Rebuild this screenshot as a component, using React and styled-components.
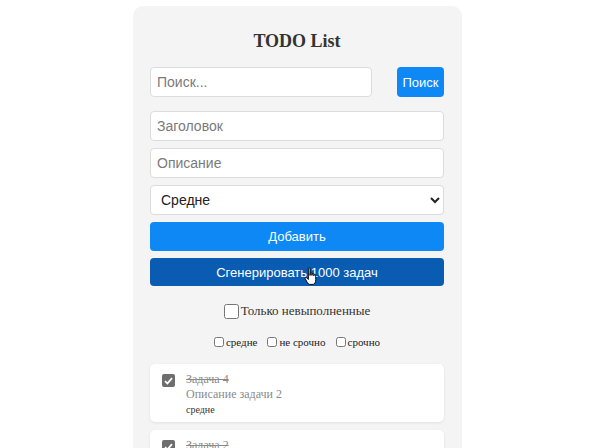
import React from 'react';
import styled, { createGlobalStyle } from 'styled-components';

const GlobalStyle = createGlobalStyle`
  body {
    margin: 0;
    background: #ffffff;
    font-family: "Liberation Serif", "Times New Roman", serif;
    overflow: hidden;
  }
`;

const Page = styled.div`
  display: flex;
  justify-content: center;
  padding: 6px 5px 0 0;
`;

const Container = styled.div`
  position: relative;
  width: 329px;
  box-sizing: border-box;
  padding: 24px 18px 20px 17px;
  background: #f4f4f4;
  border-radius: 10px;
  display: flex;
  flex-direction: column;
`;

const Title = styled.h2`
  margin: 0 0 15px;
  text-align: center;
  font-size: 18px;
  line-height: 22px;
  font-weight: bold;
  color: #333;
`;

const SearchRow = styled.div`
  display: flex;
  gap: 25px;
  margin-bottom: 14px;
`;

const Input = styled.input`
  flex: ${p => (p.$grow ? 1 : 'none')};
  height: 30px;
  box-sizing: border-box;
  padding: 0 6px;
  border: 1px solid #dcdcdc;
  border-radius: 4px;
  background: #fff;
  font-family: "Liberation Sans", Arial, sans-serif;
  font-size: 14px;
  color: #333;
  outline: none;
  &::placeholder { color: #7a7a7a; }
`;

const Form = styled.div`
  display: flex;
  flex-direction: column;
  gap: 7px;
`;

const Select = styled.select`
  height: 30px;
  box-sizing: border-box;
  padding: 0 6px;
  border: 1px solid #dcdcdc;
  border-radius: 4px;
  background: #fff;
  font-family: "Liberation Sans", Arial, sans-serif;
  font-size: 14px;
  color: #222;
`;

const Button = styled.button`
  flex: none;
  height: ${p => p.$h || 29}px;
  width: ${p => (p.$small ? '47px' : '100%')};
  box-sizing: border-box;
  border: none;
  border-radius: 4px;
  background: ${p => (p.$dark ? '#0a5cb2' : '#0d88f5')};
  color: #fff;
  font-family: "Liberation Sans", Arial, sans-serif;
  font-size: 13px;
  cursor: pointer;
  padding: 0;
`;

const OnlyRow = styled.label`
  display: flex;
  align-items: center;
  justify-content: center;
  margin-top: 17px;
  font-size: 13px;
  color: #333;
`;

const BigBox = styled.input`
  width: 15px;
  height: 15px;
  margin: 0 2px 0 0;
`;

const FilterRow = styled.div`
  display: flex;
  justify-content: center;
  gap: 10px;
  margin-top: 17px;
  font-size: 11px;
  color: #222;
`;

const FilterItem = styled.label`
  display: flex;
  align-items: center;
`;

const SmallBox = styled.input`
  width: 10px;
  height: 10px;
  margin: 0 2px 0 0;
`;

const List = styled.div`
  display: flex;
  flex-direction: column;
  gap: 8px;
  margin-top: 16px;
`;

const Card = styled.div`
  display: flex;
  align-items: flex-start;
  gap: 11px;
  padding: 8px 12px 5px;
  background: #fff;
  border-radius: 5px;
  box-shadow: 0 1px 3px rgba(0, 0, 0, 0.08);
`;

const Check = styled.span`
  flex: none;
  width: 13px;
  height: 13px;
  margin-top: 2px;
  border-radius: 2px;
  background: #6e6e6e;
  display: flex;
  align-items: center;
  justify-content: center;
`;

const Body = styled.div`
  display: flex;
  flex-direction: column;
  color: #8a8a8a;
`;

const TaskTitle = styled.span`
  font-size: 12px;
  line-height: 15px;
  text-decoration: line-through;
`;

const TaskDesc = styled.span`
  font-size: 12px;
  line-height: 15px;
`;

const Priority = styled.span`
  font-size: 10px;
  line-height: 15px;
  color: #333;
`;

const Cursor = styled.svg`
  position: absolute;
  left: 171px;
  top: 261px;
  pointer-events: none;
`;

const tasks = [
  { title: 'Задача 4', desc: 'Описание задачи 2', priority: 'средне' },
  { title: 'Задача 2', desc: 'Описание задачи 2', priority: 'средне' },
];

function CheckMark() {
  return (
    <svg width="9" height="8" viewBox="0 0 9 8">
      <path d="M1 4.2 L3.4 6.5 L8 1.2" fill="none" stroke="#fff" strokeWidth="1.8" />
    </svg>
  );
}

export default function App() {
  return (
    <>
      <GlobalStyle />
      <Page>
        <Container>
          <Title>TODO List</Title>
          <SearchRow>
            <Input $grow placeholder="Поиск..." />
            <Button $small $h={30}>Поиск</Button>
          </SearchRow>
          <Form>
            <Input placeholder="Заголовок" />
            <Input placeholder="Описание" />
            <Select defaultValue="medium">
              <option value="medium">Средне</option>
            </Select>
            <Button>Добавить</Button>
            <Button $dark $h={28}>Сгенерировать 1000 задач</Button>
          </Form>
          <OnlyRow>
            <BigBox type="checkbox" />
            Только невыполненные
          </OnlyRow>
          <FilterRow>
            <FilterItem><SmallBox type="checkbox" />средне</FilterItem>
            <FilterItem><SmallBox type="checkbox" />не срочно</FilterItem>
            <FilterItem><SmallBox type="checkbox" />срочно</FilterItem>
          </FilterRow>
          <List>
            {tasks.map((t, i) => (
              <Card key={i}>
                <Check><CheckMark /></Check>
                <Body>
                  <TaskTitle>{t.title}</TaskTitle>
                  <TaskDesc>{t.desc}</TaskDesc>
                  <Priority>{t.priority}</Priority>
                </Body>
              </Card>
            ))}
          </List>
          <Cursor width="15" height="19" viewBox="0 0 14 18">
            <path
              d="M4 1.5 C4 0.7 5.6 0.7 5.6 1.5 L5.6 8 L5.8 6.3 C5.8 5.5 7.4 5.5 7.4 6.3 L7.4 8 L7.6 6.8 C7.6 6 9.2 6 9.2 6.8 L9.2 8.4 L9.4 7.5 C9.4 6.8 11 6.8 11 7.6 L11 12 C11 14.5 10 16.5 8.5 16.5 L5.5 16.5 C4.3 16.5 3.5 15.5 2.8 14.3 L1 11 C0.6 10.2 1.6 9.4 2.3 10.1 L4 11.8 Z"
              fill="#fff"
              stroke="#000"
              strokeWidth="0.9"
            />
          </Cursor>
        </Container>
      </Page>
    </>
  );
}
